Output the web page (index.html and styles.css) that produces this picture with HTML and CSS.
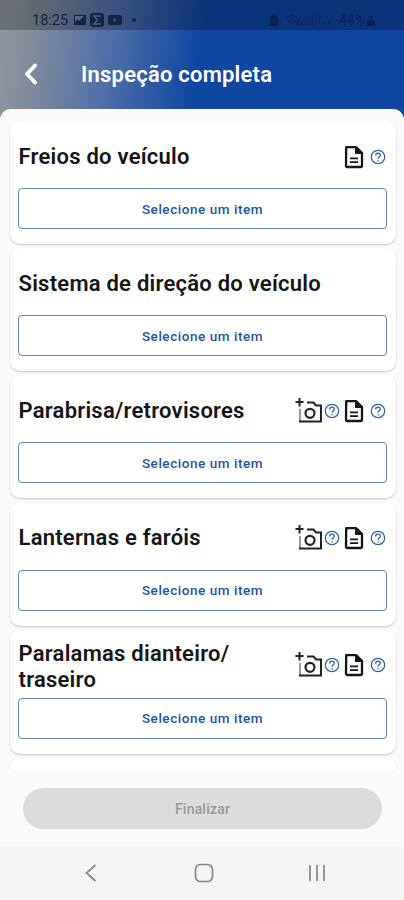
FILE: index.html
```html
<!DOCTYPE html>
<html lang="pt-BR">
<head>
    <meta charset="UTF-8">
    <meta name="viewport" content="width=device-width, initial-scale=1.0">
    <title>Inspeção completa</title>
    <link rel="stylesheet" href="styles.css">
</head>
<body>
    <svg class="sprite">
        <symbol id="icon-doc" viewBox="0 0 24 24">
            <path fill="none" stroke="currentColor" stroke-width="2.300" stroke-linejoin="round" d="M4.200 2.200h10L20 8v12.500a1.500 1.500 0 0 1-1.500 1.500h-13A1.500 1.500 0 0 1 4 20.500z"/>
            <path fill="currentColor" d="M13 2h2l5.500 5.500V9H13z"/>
            <path stroke="currentColor" stroke-width="1.700" d="M8 13.300h8M8 17.200h8"/>
        </symbol>
        <symbol id="icon-help" viewBox="0 0 16 16">
            <circle cx="8" cy="8" r="6.700" fill="none" stroke="currentColor" stroke-width="1.200"/>
            <path fill="none" stroke="currentColor" stroke-width="1.300" d="M5.700 6.400c0-3 4.600-2.800 4.600-.2 0 1.600-2.200 1.700-2.200 3.500"/>
            <circle cx="8.100" cy="11.700" r=".8" fill="currentColor"/>
        </symbol>
        <symbol id="icon-camera" viewBox="0 0 28 28">
            <path fill="none" stroke="currentColor" stroke-width="2" d="M4.500 1v8.500M.5 5h8M12 5.500h6.500l2.500 3h5v16H4"/>
            <path stroke="currentColor" stroke-width="1.500" opacity=".6" d="M5 12v12"/>
            <circle cx="15" cy="16.300" r="4.500" fill="none" stroke="currentColor" stroke-width="2.200"/>
        </symbol>
    </svg>

    <div class="screen">
        <div class="status-bar">
            <div class="status-left">
                <span class="clock">18:25</span>
                <svg width="12" height="12" viewBox="0 0 12 12"><path fill="currentColor" d="M0 1h12v10H0z"/><path fill="#55657f" d="M1 2h9L7 5 5 7 3.500 5.500 1 8z"/></svg>
                <svg width="14" height="14" viewBox="0 0 14 14"><rect width="14" height="14" rx="3" fill="currentColor"/><path fill="none" stroke="#486084" stroke-width="1.500" d="M10 4V3H4l3.500 4L4 11h6v-1"/></svg>
                <svg width="14" height="10" viewBox="0 0 14 10"><rect width="14" height="10" rx="2.500" fill="currentColor"/><path fill="#38578a" d="M5.500 3v4L9 5z"/></svg>
                <span class="dot"></span>
            </div>
            <div class="status-right">
                <svg width="10" height="13" viewBox="0 0 10 13"><path fill="currentColor" d="M1 3l2-2h4l2 2v9H1z"/><path stroke="#0c3170" d="M3 5h4M3 8h4"/></svg>
                <svg class="wifi" width="16" height="12" viewBox="0 0 16 12"><path fill="none" stroke="currentColor" stroke-width="1.100" d="M1 4c3-3 7-3 10 0M3 6.500c2-2 4-2 6 0M6 9l5-1M12 5v6M15 11V7"/></svg>
                <span class="lte"><span>VoLTE</span><span>LTE1</span></span>
                <svg class="signal" width="12" height="10" viewBox="0 0 12 10"><path stroke="currentColor" d="M1 10V8M4 10V6M7 10V4M10 10V1"/></svg>
                <span class="battery">44%</span>
                <svg width="8" height="12" viewBox="0 0 8 12"><path fill="currentColor" d="M0 7h1V2h2V1h2v1h2v5h1v5H0z" opacity=".5"/><path fill="currentColor" d="M0 7h8v5H0z"/></svg>
            </div>
        </div>

        <header class="header">
            <svg class="back" width="14" height="22" viewBox="0 0 14 22"><path fill="none" stroke="#fff" stroke-width="3.800" stroke-linecap="round" stroke-linejoin="round" d="M11 2.500L3 11l8 8.500"/></svg>
            <h1>Inspeção completa</h1>
        </header>

        <main class="list">
            <section class="card">
                <div class="card-head">
                    <h2>Freios do veículo</h2>
                    <div class="actions">
                        <svg class="doc"><use href="#icon-doc"/></svg>
                        <svg class="help help-last"><use href="#icon-help"/></svg>
                    </div>
                </div>
                <button class="select-btn">Selecione um item</button>
            </section>

            <section class="card">
                <div class="card-head">
                    <h2>Sistema de direção do veículo</h2>
                </div>
                <button class="select-btn">Selecione um item</button>
            </section>

            <section class="card">
                <div class="card-head">
                    <h2>Parabrisa/retrovisores</h2>
                    <div class="actions">
                        <svg class="camera"><use href="#icon-camera"/></svg>
                        <svg class="help"><use href="#icon-help"/></svg>
                        <svg class="doc"><use href="#icon-doc"/></svg>
                        <svg class="help help-last"><use href="#icon-help"/></svg>
                    </div>
                </div>
                <button class="select-btn">Selecione um item</button>
            </section>

            <section class="card">
                <div class="card-head">
                    <h2>Lanternas e faróis</h2>
                    <div class="actions">
                        <svg class="camera"><use href="#icon-camera"/></svg>
                        <svg class="help"><use href="#icon-help"/></svg>
                        <svg class="doc"><use href="#icon-doc"/></svg>
                        <svg class="help help-last"><use href="#icon-help"/></svg>
                    </div>
                </div>
                <button class="select-btn">Selecione um item</button>
            </section>

            <section class="card">
                <div class="card-head card-head-tall">
                    <h2>Paralamas dianteiro/<br>traseiro</h2>
                    <div class="actions">
                        <svg class="camera"><use href="#icon-camera"/></svg>
                        <svg class="help"><use href="#icon-help"/></svg>
                        <svg class="doc"><use href="#icon-doc"/></svg>
                        <svg class="help help-last"><use href="#icon-help"/></svg>
                    </div>
                </div>
                <button class="select-btn">Selecione um item</button>
            </section>

            <section class="card"></section>
        </main>

        <footer class="footer">
            <button class="finish-btn" disabled>Finalizar</button>
        </footer>

        <nav class="nav-bar">
            <svg width="20" height="20" viewBox="0 0 20 20"><path d="M14.500 2L5.500 10l9 8"/></svg>
            <svg width="20" height="20" viewBox="0 0 20 20"><rect x="1.500" y="1.500" width="17" height="17" rx="5"/></svg>
            <svg width="20" height="20" viewBox="0 0 20 20"><path d="M3 2v16M10 2v16M17 2v16"/></svg>
        </nav>
    </div>
</body>
</html>
```
FILE: styles.css
```css
* {
    margin: 0;
    padding: 0;
    box-sizing: border-box;
}

body {
    font-family: Roboto, sans-serif;
    background: #fafafa;
}

.sprite {
    display: none;
}

.screen {
    width: 404px;
    height: 900px;
    display: flex;
    flex-direction: column;
    overflow: hidden;
    background: linear-gradient(97deg, #92979f 0, #808b9d 40px, #4d6fa6 115px, #0e46a2 205px) no-repeat;
    background-size: 100% 125px;
}

/* status bar */
.status-bar {
    flex: none;
    height: 30px;
    padding: 9px 29px 0 32px;
    display: flex;
    justify-content: space-between;
    background: rgba(0, 0, 0, 0.25);
    color: #14243f;
}

.status-left,
.status-right {
    height: 22px;
    display: flex;
    align-items: center;
}

.status-left {
    gap: 4px;
}

.clock {
    width: 38px;
    font-size: 14.5px;
}

.dot {
    width: 4px;
    height: 4px;
    margin-left: 6px;
    border-radius: 50%;
    background: currentColor;
}

.status-right {
    color: #071f4c;
}

.wifi {
    margin-left: 7px;
    opacity: 0.8;
}

.lte {
    width: 17px;
    margin-left: 3px;
    display: flex;
    flex-direction: column;
    font-size: 6px;
    line-height: 6px;
    opacity: 0.8;
}

.signal {
    opacity: 0.6;
}

.battery {
    margin: 0 2px 0 5px;
    font-size: 14px;
    opacity: 0.8;
}

/* header */
.header {
    flex: none;
    height: 79px;
    padding: 9px 24px 0;
    display: flex;
    align-items: center;
    color: #fff;
}

.back {
    margin-right: 43px;
}

.header h1 {
    font-size: 22px;
    font-weight: 600;
    letter-spacing: 0.22px;
}

/* list of items */
.list {
    flex: none;
    height: 661px;
    padding: 12px 8px 0 10px;
    display: flex;
    flex-direction: column;
    gap: 4.2px;
    overflow: hidden;
    background: #fafafa;
    border-radius: 11px 11px 0 0;
}

.card {
    flex: none;
    min-height: 123px;
    padding: 10px 9px 15px 8px;
    border-radius: 10px;
    background: #fff;
    box-shadow: 0 1px 2px rgba(0, 0, 0, 0.22);
}

.card-head {
    min-height: 51px;
    margin-bottom: 6px;
    display: flex;
    align-items: center;
    justify-content: space-between;
}

.card-head-tall {
    margin: 1px 0 5px;
}

.card-head-tall .actions {
    padding-bottom: 3px;
}

.card h2 {
    padding-left: 0.5px;
    font-size: 22px;
    font-weight: 600;
    line-height: 26px;
    letter-spacing: 0.24px;
    color: #151515;
}

.actions {
    display: flex;
    align-items: center;
}

.camera {
    width: 28px;
    height: 28px;
    color: #222;
}

.doc {
    width: 24px;
    height: 24px;
    color: #151515;
}

.help {
    width: 16px;
    height: 16px;
    margin: 0 2px 0 1px;
    color: #2e5fa8;
}

.help-last {
    margin: 0 1px 0 4px;
}

.select-btn {
    display: block;
    width: 100%;
    height: 41px;
    border: 1px solid #6484b0;
    border-radius: 4px;
    background: #fff;
    font-family: inherit;
    font-size: 13.5px;
    font-weight: 500;
    letter-spacing: 0.55px;
    color: #2253a5;
}

/* footer */
.footer {
    flex: none;
    height: 76px;
    padding: 18px 22px 0 23px;
    background: #fafafa;
}

.finish-btn {
    display: block;
    width: 100%;
    height: 41px;
    border: none;
    border-radius: 21px;
    background: #dcdcdc;
    font-family: inherit;
    font-size: 14px;
    font-weight: 500;
    letter-spacing: 0.2px;
    color: #989898;
}

.nav-bar {
    flex: none;
    height: 54px;
    padding: 0 77px 0 81px;
    display: flex;
    align-items: center;
    justify-content: space-between;
    background: #f5f5f5;
}

.nav-bar svg {
    fill: none;
    stroke: #868686;
    stroke-width: 1.7;
}
```
